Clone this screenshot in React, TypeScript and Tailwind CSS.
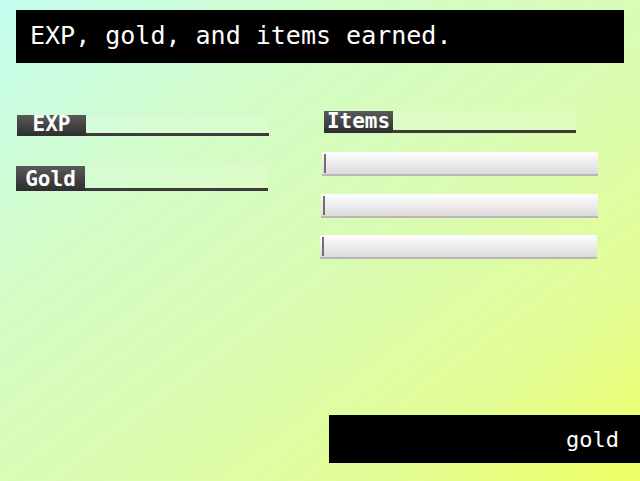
import React from 'react';

const mono = "font-['DejaVu_Sans_Mono','Liberation_Mono',monospace]";

interface LabelProps {
  text: string;
  height: string;
  width: string;
  offset?: string;
}

const SectionLabel: React.FC<LabelProps> = ({ text, height, width, offset = '' }) => (
  <div className={`flex ${height} ${width} ${offset}`}>
    <div className={`w-[69px] h-full flex items-end justify-center pb-[1px] bg-gradient-to-b from-[#5a5a5a] to-[#2e2e2e] text-white text-[21px] font-bold leading-none ${mono}`}>
      {text}
    </div>
    <div className="flex-1 flex flex-col">
      <div className="flex-1 bg-white/15"></div>
      <div className="h-[3px] bg-[#3b3b3b]"></div>
    </div>
  </div>
);

const ItemSlot: React.FC<{ className: string }> = ({ className }) => (
  <div className={`h-[24px] flex items-center bg-gradient-to-b from-white to-[#dddada] border-b-2 border-[#b8b6b8] ${className}`}>
    <div className="ml-[2px] w-[2px] h-[19px] bg-[#707070]"></div>
  </div>
);

const App: React.FC = () => {
  return (
    <div className="w-[640px] h-[481px] overflow-hidden flex flex-col bg-[linear-gradient(to_bottom_right,#c4fdf0_0%,#d3fcc6_30%,#dafcb2_55%,#e3fd94_80%,#eeff62_100%)]">
      {/* message window */}
      <div className="mx-[16px] mt-[10px] h-[53px] bg-black pl-[14px] pt-[11px]">
        <p className={`text-white text-[25px] leading-[29px] whitespace-pre ${mono}`}>EXP, gold, and items earned.</p>
      </div>

      <div className="flex">
        <div className="ml-[16px] w-[253px] flex flex-col">
          <SectionLabel text="EXP" height="h-[21px]" width="w-[252px]" offset="mt-[52px] ml-[1px]" />
          <SectionLabel text="Gold" height="h-[25px]" width="w-[252px]" offset="mt-[30px]" />
        </div>

        <div className="ml-[51px] w-[278px] flex flex-col">
          <SectionLabel text="Items" height="h-[22px]" width="w-[252px]" offset="mt-[48px] ml-[4px]" />
          <ItemSlot className="mt-[19px] ml-[2px] w-[276px]" />
          <ItemSlot className="mt-[18px] ml-[1px] w-[277px]" />
          <ItemSlot className="mt-[17px] w-[277px]" />
        </div>
      </div>

      {/* currency window */}
      <div className="mt-auto mb-[18px] flex justify-end">
        <div className="w-[311px] h-[48px] bg-black flex items-center justify-end pr-[21px]">
          <span className={`text-white text-[22px] ${mono}`}>gold</span>
        </div>
      </div>
    </div>
  );
};

export default App;
